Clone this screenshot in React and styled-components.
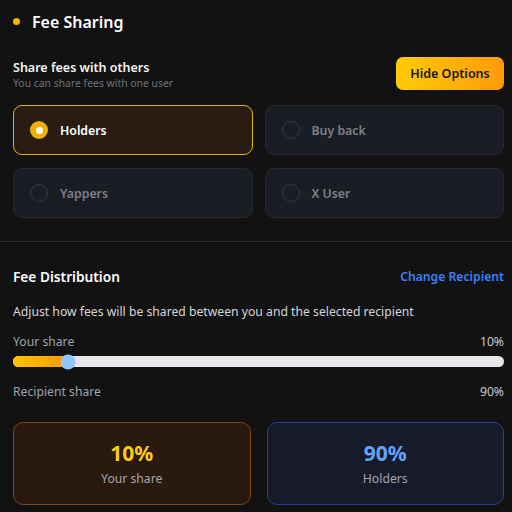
import React, { useState } from 'react'
import styled, { createGlobalStyle } from 'styled-components'

const GlobalStyle = createGlobalStyle`
  html, body {
    margin: 0;
    padding: 0;
    background: #121212;
  }
  body {
    font-family: 'Noto Sans', 'Open Sans', sans-serif;
    color: #f3f4f6;
  }
`

const Page = styled.div`
  width: 512px;
  height: 512px;
  overflow: hidden;
  background: #121212;
`

const Section = styled.section`
  padding: 0 8px 0 13px;
`

const TitleRow = styled.div`
  display: flex;
  align-items: center;
  gap: 12px;
  height: 43px;
`

const Dot = styled.span`
  width: 7px;
  height: 7px;
  border-radius: 50%;
  background: #f5b400;
`

const Title = styled.h2`
  margin: 0;
  font-size: 16px;
  font-weight: 600;
  color: #fff;
`

const ShareHead = styled.div`
  display: flex;
  justify-content: space-between;
  align-items: flex-start;
  height: 33px;
  margin-top: 14px;
`

const HeadText = styled.div`
  display: flex;
  flex-direction: column;
  padding-top: 2px;
`

const SubTitle = styled.div`
  font-size: 12.5px;
  font-weight: 600;
  color: #f3f4f6;
  line-height: 17px;
`

const Hint = styled.div`
  font-size: 10.4px;
  color: #6b7280;
  line-height: 15px;
`

const HideButton = styled.button`
  width: 108px;
  height: 33px;
  border: none;
  border-radius: 7px;
  background: linear-gradient(90deg, #ffcb05, #ff9a0a);
  color: #161616;
  font-family: inherit;
  font-size: 12.5px;
  font-weight: 600;
  cursor: pointer;
`

const OptionGrid = styled.div`
  display: grid;
  grid-template-columns: 1fr 1fr;
  column-gap: 12px;
  row-gap: 13px;
  margin-top: 15px;
`

const Option = styled.div`
  height: 50px;
  box-sizing: border-box;
  display: flex;
  align-items: center;
  gap: 12px;
  padding-left: 16px;
  border-radius: 9px;
  border: 1.5px solid ${p => (p.$active ? '#e8b400' : '#252932')};
  background: ${p => (p.$active ? '#281c13' : '#1a1d24')};
  cursor: pointer;
`

const Radio = styled.span`
  width: 18px;
  height: 18px;
  box-sizing: border-box;
  border-radius: 50%;
  display: flex;
  align-items: center;
  justify-content: center;
  background: ${p => (p.$active ? '#f0b000' : 'transparent')};
  border: ${p => (p.$active ? 'none' : '1.5px solid #343844')};

  &::after {
    content: '';
    display: ${p => (p.$active ? 'block' : 'none')};
    width: 7px;
    height: 7px;
    border-radius: 50%;
    background: #fff;
  }
`

const OptionLabel = styled.span`
  font-size: 12.3px;
  font-weight: 600;
  color: ${p => (p.$active ? '#fff' : '#7d8089')};
`

const Divider = styled.hr`
  margin: 23px 0 0;
  border: none;
  border-top: 1px solid #262a33;
`

const DistHead = styled.div`
  display: flex;
  justify-content: space-between;
  align-items: center;
  margin-top: 25px;
`

const DistTitle = styled.h3`
  margin: 0;
  font-size: 13.7px;
  font-weight: 600;
  color: #fff;
`

const LinkButton = styled.button`
  background: none;
  border: none;
  padding: 0;
  font-family: inherit;
  font-size: 12.2px;
  font-weight: 600;
  color: #3b82f6;
  cursor: pointer;
`

const Description = styled.p`
  margin: 17px 0 0;
  font-size: 12.2px;
  color: #d4d6da;
`

const ShareLine = styled.div`
  display: flex;
  justify-content: space-between;
  font-size: 12.2px;
  color: #9ca3af;
  margin-top: ${p => p.$top}px;

  & b {
    font-weight: 400;
    color: #c9cbd0;
  }
`

const Track = styled.div`
  position: relative;
  height: 11px;
  border-radius: 6px;
  background: #e5e7eb;
  margin-top: 6px;
`

const Fill = styled.div`
  height: 100%;
  border-radius: 6px 0 0 6px;
  background: linear-gradient(90deg, #ffc400, #ff9800);
`

const Thumb = styled.span`
  position: absolute;
  top: 50%;
  width: 15px;
  height: 15px;
  border-radius: 50%;
  background: #93c5fd;
  transform: translate(-50%, -50%);
`

const Cards = styled.div`
  display: grid;
  grid-template-columns: 1fr 1fr;
  gap: 16px;
  margin-top: 22px;
`

const StatCard = styled.div`
  height: 83px;
  box-sizing: border-box;
  display: flex;
  flex-direction: column;
  align-items: center;
  justify-content: center;
  border-radius: 10px;
  border: 1px solid ${p => (p.$tone === 'blue' ? '#24419a' : '#7a4710')};
  background: ${p => (p.$tone === 'blue' ? '#161a2b' : '#29190f')};
`

const StatValue = styled.div`
  font-size: 21px;
  font-weight: 700;
  line-height: 24px;
  color: ${p => (p.$tone === 'blue' ? '#60a5fa' : '#facc15')};
`

const StatLabel = styled.div`
  margin-top: 5px;
  font-size: 12.2px;
  color: #a3a6ad;
`

const options = ['Holders', 'Buy back', 'Yappers', 'X User']

export default function App() {
  const [selected, setSelected] = useState('Holders')
  const share = 10

  return (
    <Page>
      <GlobalStyle />
      <Section>
        <TitleRow>
          <Dot />
          <Title>Fee Sharing</Title>
        </TitleRow>

        <ShareHead>
          <HeadText>
            <SubTitle>Share fees with others</SubTitle>
            <Hint>You can share fees with one user</Hint>
          </HeadText>
          <HideButton>Hide Options</HideButton>
        </ShareHead>

        <OptionGrid>
          {options.map(o => (
            <Option key={o} $active={o === selected} onClick={() => setSelected(o)}>
              <Radio $active={o === selected} />
              <OptionLabel $active={o === selected}>{o}</OptionLabel>
            </Option>
          ))}
        </OptionGrid>
      </Section>

      <Divider />

      <Section>
        <DistHead>
          <DistTitle>Fee Distribution</DistTitle>
          <LinkButton>Change Recipient</LinkButton>
        </DistHead>
        <Description>
          Adjust how fees will be shared between you and the selected recipient
        </Description>

        <ShareLine $top={13}>
          <span>Your share</span>
          <b>{share}%</b>
        </ShareLine>
        <Track>
          <Fill style={{ width: `${(55 / 491) * 100}%` }} />
          <Thumb style={{ left: `${(55 / 491) * 100}%` }} />
        </Track>
        <ShareLine $top={16}>
          <span>Recipient share</span>
          <b>{100 - share}%</b>
        </ShareLine>

        <Cards>
          <StatCard $tone="orange">
            <StatValue $tone="orange">{share}%</StatValue>
            <StatLabel>Your share</StatLabel>
          </StatCard>
          <StatCard $tone="blue">
            <StatValue $tone="blue">{100 - share}%</StatValue>
            <StatLabel>{selected}</StatLabel>
          </StatCard>
        </Cards>
      </Section>
    </Page>
  )
}
